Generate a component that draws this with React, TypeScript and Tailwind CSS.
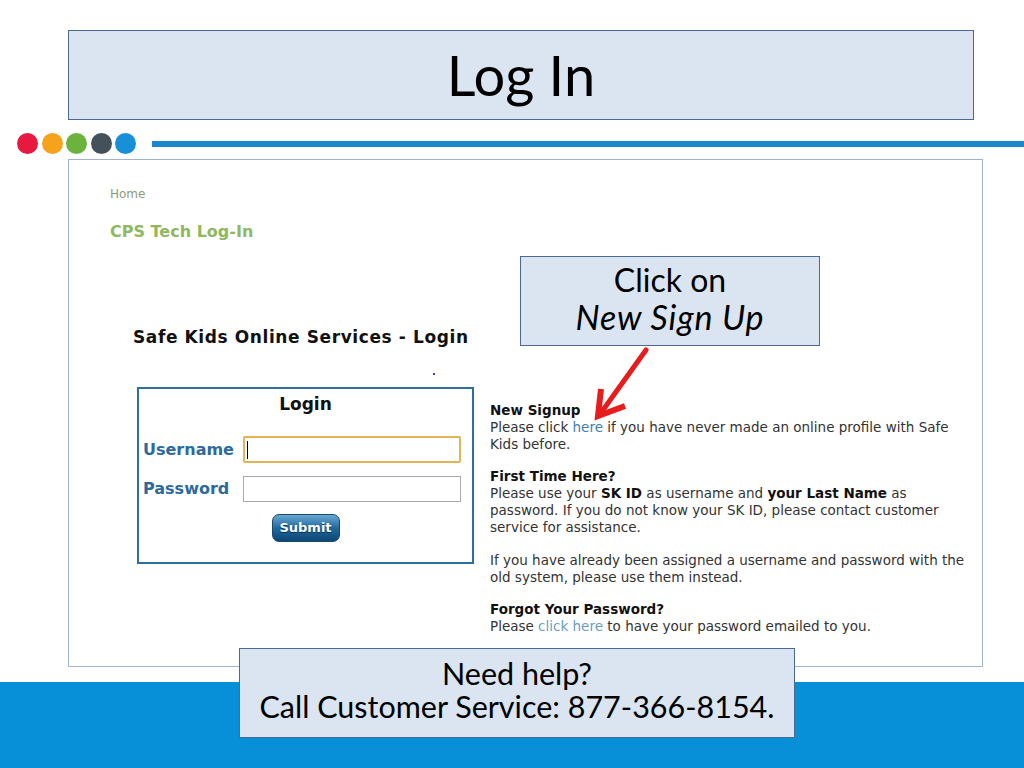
const dots = ["#e8193f", "#f5a31a", "#6cb33e", "#44505a", "#1790d8"];

function Arrow() {
  return (
    <svg className="absolute left-[585px] top-[345px]" width="70" height="80" viewBox="585 345 70 80">
      <line x1="646" y1="350" x2="603" y2="410" stroke="#e81c1c" strokeWidth="5" strokeLinecap="round" />
      <polyline points="601,389 598,416 625,406" fill="none" stroke="#e81c1c" strokeWidth="6" strokeLinejoin="miter" />
    </svg>
  );
}

export default function App() {
  return (
    <div className="relative w-[1024px] h-[768px] overflow-hidden bg-white flex flex-col font-['Lato',sans-serif]">
      {/* Title */}
      <div className="ml-[68px] mt-[30px] w-[906px] h-[90px] border border-[#4a6a94] bg-[#dbe5f1] flex items-center justify-center">
        <h1 className="text-[56px] leading-none text-black">Log In</h1>
      </div>

      {/* Dots + rule */}
      <div className="mt-[13px] h-[21px] flex items-center">
        <div className="ml-[17px] flex gap-[3.5px]">
          {dots.map((c) => (
            <span key={c} className="block w-[21px] h-[21px] rounded-full" style={{ backgroundColor: c }} />
          ))}
        </div>
        <div className="ml-[16px] flex-1 h-[6px] bg-[#1b88cc]" />
      </div>

      {/* Screenshot panel */}
      <div className="ml-[68px] mt-[5px] w-[915px] h-[508px] border border-[#a0b4cc] bg-white pl-[41px] pt-[27px] font-['DejaVu_Sans',sans-serif]">
        <p className="text-[12px] leading-[14px] text-[#8a9a7c]">Home</p>
        <p className="mt-[21px] text-[16px] leading-[20px] font-bold text-[#8fb860]">CPS Tech Log-In</p>

        <div className="mt-[84px] ml-[23px] flex items-start">
          {/* Login form */}
          <div className="w-[341px]">
            <h2 className="text-[17px] leading-[22px] font-bold tracking-[0.6px] text-[#111]">Safe Kids Online Services - Login</h2>
            <div className="ml-[300px] mt-[25px] w-[2px] h-[2px] bg-[#3a3ad0]" />
            <div className="ml-[4px] mt-[12px] w-[337px] h-[177px] border-2 border-[#2f6f9f] px-[4px] pt-[4px]">
              <p className="text-center text-[17px] leading-[22px] font-bold text-[#111]">Login</p>
              <div className="mt-[21px] flex items-center">
                <span className="w-[100px] text-[16px] font-bold text-[#2c6a9c]">Username</span>
                <div className="relative w-[218px] h-[27px] border-2 border-[#e2b457] rounded-[2px] bg-white">
                  <span className="absolute left-[2px] top-[3px] w-[1px] h-[18px] bg-black" />
                </div>
              </div>
              <div className="mt-[13px] flex items-center">
                <span className="w-[100px] text-[16px] font-bold text-[#2c6a9c]">Password</span>
                <div className="w-[218px] h-[26px] border border-[#a9a9a9] bg-white" />
              </div>
              <button className="mx-auto mt-[12px] flex items-center justify-center w-[68px] h-[28px] rounded-[7px] border border-[#184a72] bg-linear-to-b from-[#6aa8d4] via-[#1f6a9e] to-[#0d4674] text-[13px] font-bold text-white [text-shadow:0_1px_1px_#00304f]">
                Submit
              </button>
            </div>
          </div>

          {/* Info text */}
          <div className="ml-[16px] mt-[76px] text-[13.5px] leading-[17px] text-[#333] whitespace-nowrap">
            <p className="font-bold text-[#111]">New Signup</p>
            <p>
              Please click <span className="text-[#3d7fae]">here</span> if you have never made an online profile with Safe
              <br />
              Kids before.
            </p>
            <p className="mt-[15px] font-bold text-[#111]">First Time Here?</p>
            <p>
              Please use your <b className="text-[#111]">SK ID</b> as username and <b className="text-[#111]">your Last Name</b> as
              <br />
              password. If you do not know your SK ID, please contact customer
              <br />
              service for assistance.
            </p>
            <p className="mt-[16px]">
              If you have already been assigned a username and password with the
              <br />
              old system, please use them instead.
            </p>
            <p className="mt-[15px] font-bold text-[#111]">Forgot Your Password?</p>
            <p>
              Please <span className="text-[#6a9fc2]">click here</span> to have your password emailed to you.
            </p>
          </div>
        </div>
      </div>

      {/* Bottom band */}
      <div className="mt-[15px] h-[86px] bg-[#0790d7]" />

      {/* Callout */}
      <div className="absolute left-[520px] top-[256px] w-[300px] h-[90px] border border-[#4a6a94] bg-[#dbe5f1] flex flex-col items-center justify-center pb-[6px] leading-[37px] text-black">
        <span className="text-[32px]">Click on</span>
        <span className="text-[34px] italic tracking-[0.8px]">New Sign Up</span>
      </div>
      <Arrow />

      {/* Help box */}
      <div className="absolute left-[239px] top-[648px] w-[556px] h-[90px] border border-[#4a6a94] bg-[#dbe5f1] flex flex-col items-center justify-center pb-[6px] text-[30.5px] leading-[33px] text-black">
        <span>Need help?</span>
        <span>Call Customer Service: 877-366-8154.</span>
      </div>
    </div>
  );
}
